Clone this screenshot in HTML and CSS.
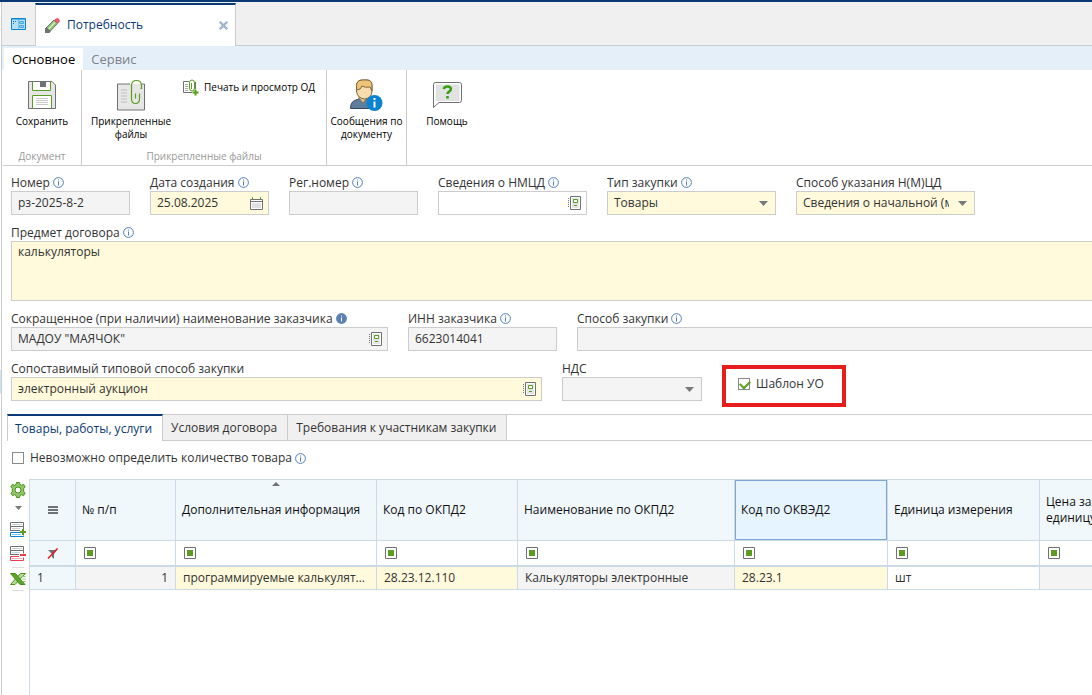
FILE: index.html
```html
<!DOCTYPE html>
<html lang="ru">
<head>
    <meta charset="UTF-8">
    <meta name="viewport" content="width=device-width, initial-scale=1.0">
    <title>Потребность</title>
    <link rel="stylesheet" href="styles.css">
</head>
<body>
    <!-- Shared icons -->
    <svg class="sprite" aria-hidden="true">
        <symbol id="icon-info" viewBox="0 0 11 11">
            <circle cx="5.5" cy="5.5" r="4.9" fill="#fff" stroke="#4f7fba" />
            <path d="M5 2.5h1v1H5zM5 4.6h1v4H5z" fill="#4f7fba" />
        </symbol>
        <symbol id="icon-info-solid" viewBox="0 0 11 11">
            <circle cx="5.5" cy="5.5" r="5.4" fill="#5b80b2" />
            <path d="M5 2.5h1v1H5zM5 4.6h1v4H5z" fill="#fff" />
        </symbol>
        <symbol id="icon-book" viewBox="0 0 13 14">
            <path d="M2.5 .5h10v13h-10z" fill="#fff" stroke="#6f7275" />
            <path d="M4 2h7v10H4z" fill="#e4e4e4" />
            <path d="M5.500 3.500h4v3h-4z" fill="#fff" stroke="#5b9e1f" />
            <path d="M6 9h3v1H6z" fill="#5b9e1f" />
            <path d="M0 2h1v1H0zM0 4h1v1H0zM0 6h1v1H0zM0 8h1v1H0zM0 10h1v1H0z" fill="#6f7275" />
        </symbol>
        <symbol id="icon-arrow" viewBox="0 0 9 5">
            <path d="M0 0h9L4.5 5z" fill="#77797c" />
        </symbol>
        <symbol id="icon-filter" viewBox="0 0 12 12">
            <path d="M.5 .5h11v11H.5z" fill="#fff" stroke="#6f7275" />
            <path d="M3 3h6v6H3z" fill="#5b9e1f" />
        </symbol>
    </svg>

    <header class="window-tabs">
        <button class="home-tab" aria-label="Рабочий стол">
            <svg width="15" height="12" viewBox="0 0 15 12">
                <path d="M.5 .5h14v11H.5z" fill="#b5e0f8" stroke="#0a84d0" />
                <path d="M1 1h13v1H1z" fill="#0a84d0" opacity=".5" />
                <path d="M2 3h1v1H2zM4 3h1v1H4zM2 5h1v1H2z" fill="#2a6a94" />
                <path d="M7 2h1v9H7z" fill="#0a84d0" opacity=".35" />
                <path d="M8.5 3.5h4v2h-4zM8.5 7.5h4v2h-4z" fill="#8dccef" stroke="#4cabdf" />
            </svg>
        </button>
        <div class="window-tab">
            <svg width="15" height="15" viewBox="0 0 15 15">
                <path d="M.5 14.500V10.500L9 2l3.500 3.500-8.500 9z" fill="#8cc56a" stroke="#6f7275" />
                <path d="M3 11.500l7-7" stroke="#d9f0cc" stroke-width="1.200" />
                <path d="M0 15v-4.500l2-1L5.500 13l-1 2z" fill="#6f7275" />
                <path d="M9.200 2L11 .5q1.500-1 3 .5t.5 3L12.800 5.800z" fill="#ef5a70" />
            </svg>
            <span>Потребность</span>
            <button aria-label="Закрыть">
                <svg width="9" height="9" viewBox="0 0 9 9">
                    <path d="M.8 .8l7.400 7.400M8.200 .8L.8 8.200" stroke="#a4b6cc" stroke-width="2.400" />
                </svg>
            </button>
        </div>
    </header>

    <main>
        <nav class="ribbon-tabs">
            <button class="active">Основное</button>
            <button>Сервис</button>
        </nav>

        <div class="ribbon">
            <section class="group group-document">
                <button class="big">
                    <svg width="28" height="28" viewBox="0 0 28 28">
                        <path d="M.5 .5h23.500l3.500 3.500v23.500H.5z" fill="#e6e6e6" stroke="#6f7275" />
                        <path d="M4.500 1v8.500h18V1" fill="#fff" stroke="#5b9e1f" />
                        <path d="M5 .5h17" stroke="#6f7275" />
                        <path d="M12 1h6v5h-6z" fill="#6f7275" />
                        <path d="M4.500 27.500v-13h19v13" fill="#fff" stroke="#5b9e1f" />
                        <path d="M8 17.500h12M8 19.500h12M8 21.500h12M8 23.500h12" stroke="#c9c9c9" />
                        <path d="M.5 27.500h27" stroke="#6f7275" />
                    </svg>
                    Сохранить
                </button>
                <h2>Документ</h2>
            </section>

            <section class="group group-files">
                <div class="actions">
                    <button class="big">
                        <svg width="28" height="31" viewBox="0 0 28 31">
                            <path d="M.5 4.500h27v26H.5z" fill="#e6e6e6" />
                            <path d="M13 4.500H.5v26h27v-26H25" fill="none" stroke="#6f7275" />
                            <path d="M4 10.500h6M4 13.500h6M4 16.500h6M4 19.500h6M4 22.500h6" stroke="#c2c2c2" />
                            <path d="M14.500 17V6q0-5 5-5t5 5v3h-1M22.500 14v5.500q0 4.500-4 4.500t-4-4.500V9M18.500 14v5" fill="none" stroke="#5b9e1f" stroke-width="1.200" />
                        </svg>
                        Прикрепленные файлы
                    </button>
                    <button class="small">
                        <svg width="17" height="17" viewBox="0 0 17 17">
                            <path d="M7 2.500H1.500v11H10" fill="none" stroke="#6f7275" />
                            <path d="M13.500 3v7" stroke="#6f7275" />
                            <path d="M3 5.500h3M3 7.500h3M3 9.500h3M3 11.500h3" stroke="#a9a9a9" />
                            <path d="M9.500 4v6M7.500 9V4q0-3 2.500-3t2.500 3v5q0 3-2.500 3T7.500 9z" fill="none" stroke="#5b9e1f" />
                            <path d="M12.500 10.500h2v2h2v2h-2v2h-2v-2h-2v-2h2z" fill="#5b9e1f" />
                        </svg>
                        Печать и просмотр ОД
                    </button>
                </div>
                <h2>Прикрепленные файлы</h2>
            </section>

            <section class="group group-messages">
                <button class="big">
                    <svg width="33" height="32" viewBox="0 0 33 32">
                        <path d="M.5 29.500q0-8 7-9l4-2h4l5 2q5 2 5 9z" fill="#5f7d9c" stroke="#33485e" />
                        <path d="M9 19l4 5 4-5v-5H9z" fill="#eac38d" stroke="#7d694b" stroke-width=".8" />
                        <path d="M6.500 7q0-6 6-6h4.500q5 0 5 6v5q0 7-7.500 8Q7 19 6.500 12z" fill="#f7dcae" stroke="#80663c" />
                        <path d="M6.500 11V7q0-6 6-6H17q5 0 5 6v5l-2-4q-5 1-8-1-1 4-5.500 4z" fill="#f0c478" stroke="#80663c" />
                        <circle cx="24.500" cy="24" r="8" fill="#0a84d0" />
                        <path d="M23.500 19h2v2h-2zM23.500 22.500h2v6h-2z" fill="#fff" />
                    </svg>
                    Сообщения по документу
                </button>
            </section>

            <section class="group group-help">
                <button class="big">
                    <svg width="29" height="26" viewBox="0 0 29 26">
                        <path d="M2.500 .5h24q2 0 2 2v16q0 2-2 2H6l-5.500 5v-23q0-2 2-2z" fill="#fff" stroke="#6f7275" />
                        <path d="M3 2.500h23.500V19H2.500z" fill="#e2e2e2" />
                        <path d="M10.800 7q.5-2.500 3.700-2.500t3.400 2.400q0 1.800-2 2.900-1.400.8-1.400 2.300" fill="none" stroke="#36a014" stroke-width="2.600" />
                        <path d="M13.200 14h2.600v2.600h-2.600z" fill="#36a014" />
                    </svg>
                    Помощь
                </button>
            </section>
        </div>

        <form class="document">
            <div class="row">
                <div class="field w-number">
                    <label for="number">Номер<svg class="info"><use href="#icon-info" /></svg></label>
                    <div class="box readonly"><input type="text" id="number" value="рз-2025-8-2" readonly></div>
                </div>
                <div class="field w-number">
                    <label for="created">Дата создания<svg class="info"><use href="#icon-info" /></svg></label>
                    <div class="box required">
                        <input type="text" id="created" value="25.08.2025">
                        <button type="button" aria-label="Календарь">
                            <svg width="13" height="13" viewBox="0 0 13 13">
                                <path d="M.5 2.500h12v10H.5z" fill="#fff" stroke="#6f7275" />
                                <path d="M1 4.500h11" stroke="#6f7275" />
                                <path d="M2 6h9v5H2z" fill="#e0e0e0" />
                                <path d="M2.500 0v2M10.500 0v2" stroke="#5b9e1f" />
                            </svg>
                        </button>
                    </div>
                </div>
                <div class="field w-reg">
                    <label for="reg">Рег.номер<svg class="info"><use href="#icon-info" /></svg></label>
                    <div class="box readonly"><input type="text" id="reg" readonly></div>
                </div>
                <div class="field w-code">
                    <label for="nmcd">Сведения о НМЦД<svg class="info"><use href="#icon-info" /></svg></label>
                    <div class="box">
                        <input type="text" id="nmcd">
                        <button type="button" aria-label="Выбрать"><svg class="book"><use href="#icon-book" /></svg></button>
                    </div>
                </div>
                <div class="field w-type">
                    <label for="type">Тип закупки<svg class="info"><use href="#icon-info" /></svg></label>
                    <div class="box required">
                        <select id="type"><option>Товары</option></select>
                        <svg class="arrow"><use href="#icon-arrow" /></svg>
                    </div>
                </div>
                <div class="field w-method">
                    <label for="method">Способ указания Н(М)ЦД</label>
                    <div class="box required">
                        <select id="method"><option>Сведения о начальной (максимальной) цене</option></select>
                        <svg class="arrow"><use href="#icon-arrow" /></svg>
                    </div>
                </div>
            </div>

            <div class="row">
                <div class="field grow">
                    <label for="subject">Предмет договора<svg class="info"><use href="#icon-info" /></svg></label>
                    <textarea id="subject">калькуляторы</textarea>
                </div>
            </div>

            <div class="row">
                <div class="field w-customer">
                    <label for="customer">Сокращенное (при наличии) наименование заказчика<svg class="info"><use href="#icon-info-solid" /></svg></label>
                    <div class="box readonly">
                        <input type="text" id="customer" value="МАДОУ &quot;МАЯЧОК&quot;" readonly>
                        <button type="button" aria-label="Выбрать"><svg class="book"><use href="#icon-book" /></svg></button>
                    </div>
                </div>
                <div class="field w-code">
                    <label for="inn">ИНН заказчика<svg class="info"><use href="#icon-info" /></svg></label>
                    <div class="box readonly"><input type="text" id="inn" value="6623014041" readonly></div>
                </div>
                <div class="field grow">
                    <label for="way">Способ закупки<svg class="info"><use href="#icon-info" /></svg></label>
                    <div class="box readonly open"><input type="text" id="way" readonly></div>
                </div>
            </div>

            <div class="row">
                <div class="field w-typical">
                    <label for="typical">Сопоставимый типовой способ закупки</label>
                    <div class="box required">
                        <input type="text" id="typical" value="электронный аукцион">
                        <button type="button" aria-label="Выбрать"><svg class="book"><use href="#icon-book" /></svg></button>
                    </div>
                </div>
                <div class="field w-vat">
                    <label for="vat">НДС</label>
                    <div class="box readonly">
                        <select id="vat"><option></option></select>
                        <svg class="arrow"><use href="#icon-arrow" /></svg>
                    </div>
                </div>
                <label class="check highlight"><input type="checkbox" checked>Шаблон УО</label>
            </div>
        </form>

        <div class="detail">
            <nav class="detail-tabs">
                <button class="active">Товары, работы, услуги</button>
                <button>Условия договора</button>
                <button>Требования к участникам закупки</button>
            </nav>

            <label class="check unknown-count"><input type="checkbox">Невозможно определить количество товара<svg class="info"><use href="#icon-info" /></svg></label>

            <div class="grid">
                <div class="grid-tools">
                    <button aria-label="Настройки">
                        <svg width="16" height="16" viewBox="0 0 16 16">
                            <path d="M6.500 .5h3l.5 2 1.500.8 2-1 1.700 2.600L13.700 6.500v3l1.500 1.600-1.700 2.600-2-1-1.500.8-.5 2h-3l-.5-2-1.500-.8-2 1L.8 11.100l1.500-1.600v-3L.8 4.900l1.700-2.600 2 1L6 2.500z" fill="#8fc56b" stroke="#4c9117" />
                            <circle cx="8" cy="8" r="3" fill="#fff" stroke="#4c9117" />
                        </svg>
                    </button>
                    <button class="more" aria-label="Меню настроек">
                        <svg width="7" height="4" viewBox="0 0 9 5"><use href="#icon-arrow" /></svg>
                    </button>
                    <button aria-label="Добавить строку">
                        <svg width="16" height="16" viewBox="0 0 16 16">
                            <path d="M.5 .5h13v4H.5zM.5 8.500v-4h13v3" fill="#fff" stroke="#6f7275" />
                            <path d="M0 8.500h10" stroke="#6f7275" />
                            <path d="M2 2.500h10M2 6.500h8" stroke="#cfcfcf" />
                            <path d="M10 10.500H.5v4h13v-1" fill="#fff" stroke="#0a84d0" />
                            <path d="M2 12.500h9" stroke="#8cc9ee" />
                            <path d="M12 7h2v2h2v2h-2v2h-2v-2h-2V9h2z" fill="#5b9e1f" />
                        </svg>
                    </button>
                    <button aria-label="Удалить строку">
                        <svg width="16" height="16" viewBox="0 0 16 16">
                            <path d="M.5 .5h13v4H.5zM.5 8.500v-4h13v3" fill="#fff" stroke="#6f7275" />
                            <path d="M0 8.500h9" stroke="#6f7275" />
                            <path d="M2 2.500h10M2 6.500h8" stroke="#cfcfcf" />
                            <path d="M9 10.500H.5v4h13v-3" fill="#fff" stroke="#ec3a4e" />
                            <path d="M2 12.500h10" stroke="#f7a9b1" />
                            <path d="M10 8h6v2h-6z" fill="#ec3a4e" />
                        </svg>
                    </button>
                    <hr>
                    <button aria-label="Выгрузить в Excel">
                        <svg width="16" height="12" viewBox="0 0 16 12">
                            <path d="M10.500 .5h5L5 11.500H.5z" fill="#b4dc9a" stroke="#4c9117" />
                            <path d="M.5 .5h5l9.500 11h-5z" fill="#5ba529" stroke="#4c9117" />
                            <path d="M11.500 3.500h4M12.500 6h3M12.500 8.500h3" stroke="#8fc56b" />
                        </svg>
                    </button>
                    <hr>
                </div>

                <div class="grid-body">
                    <table>
                        <colgroup>
                            <col class="c-menu"><col class="c-num"><col class="c-extra"><col class="c-okpd"><col class="c-name"><col class="c-okved"><col class="c-unit"><col class="c-price">
                        </colgroup>
                        <thead>
                            <tr class="heads">
                                <th class="center">
                                    <svg width="10" height="8" viewBox="0 0 10 8"><path d="M0 0h10v2H0zM0 3h10v2H0zM0 6h10v2H0z" fill="#6f7275" /></svg>
                                </th>
                                <th>№ п/п</th>
                                <th class="sorted">Дополнительная информация</th>
                                <th>Код по ОКПД2</th>
                                <th>Наименование по ОКПД2</th>
                                <th class="selected">Код по ОКВЭД2</th>
                                <th>Единица измерения</th>
                                <th>Цена за<br>единицу</th>
                            </tr>
                            <tr class="filters">
                                <td class="side center">
                                    <svg width="12" height="11" viewBox="0 0 12 11">
                                        <path d="M1 2h9L7 6v5L5 9V6z" fill="#6f7275" />
                                        <path d="M1 10.500L10.500 .5" stroke="#e51c23" stroke-width="1.500" />
                                    </svg>
                                </td>
                                <td><svg class="filter"><use href="#icon-filter" /></svg></td>
                                <td><svg class="filter"><use href="#icon-filter" /></svg></td>
                                <td><svg class="filter"><use href="#icon-filter" /></svg></td>
                                <td><svg class="filter"><use href="#icon-filter" /></svg></td>
                                <td><svg class="filter"><use href="#icon-filter" /></svg></td>
                                <td><svg class="filter"><use href="#icon-filter" /></svg></td>
                                <td><svg class="filter"><use href="#icon-filter" /></svg></td>
                            </tr>
                        </thead>
                        <tbody>
                            <tr>
                                <td class="side">1</td>
                                <td class="readonly num">1</td>
                                <td class="required">программируемые калькуляторы</td>
                                <td class="required">28.23.12.110</td>
                                <td class="readonly">Калькуляторы электронные</td>
                                <td class="required">28.23.1</td>
                                <td>шт</td>
                                <td class="readonly"></td>
                            </tr>
                        </tbody>
                    </table>
                </div>
            </div>
        </div>
    </main>
</body>
</html>
```
FILE: styles.css
```css
* {
    box-sizing: border-box;
}
body {
    margin: 0;
    min-height: 100vh;
    display: flex;
    flex-direction: column;
    overflow: hidden;
    border-top: 2px solid #0a3a73;
    background: #fff;
    color: #333;
    font: 12px/16px "Open Sans", "Noto Sans", sans-serif;
}
button, input, select, textarea {
    margin: 0;
    padding: 0;
    border: 0;
    border-radius: 0;
    background: none;
    color: inherit;
    font: inherit;
}
button {
    cursor: pointer;
}
svg {
    display: block;
    flex: none;
}
.sprite {
    position: absolute;
    width: 0;
    height: 0;
}

/* Window tabs */
.window-tabs {
    display: flex;
    height: 44px;
    margin-left: 1px;
    border-left: 1px solid #ccc;
    border-bottom: 1px solid #ccc;
    background: #f0f0f0;
}
.home-tab {
    width: 33px;
    display: flex;
    align-items: center;
    justify-content: center;
}
.window-tab {
    width: 201px;
    height: 44px;
    display: flex;
    align-items: center;
    gap: 7px;
    padding: 0 7px 2px 9px;
    margin-top: 1px;
    border: 1px solid #ccc;
    border-top: 2px solid #0a3a73;
    border-bottom: 0;
    background: #fff;
    color: #0a3a73;
}
.window-tab span {
    flex: 1;
}

main {
    flex: 1;
    display: flex;
    flex-direction: column;
    margin-left: 1px;
    border-left: 1px solid #ccc;
}
/* handle of the collapsed side panel */
main::before {
    content: "";
    position: absolute;
    top: 370px;
    left: 0;
    width: 1px;
    height: 24px;
    background: #cce6f8;
}

/* Ribbon */
.ribbon-tabs {
    display: flex;
    height: 24px;
    padding: 2px 0 0 2px;
    background: #e5effa;
}
.ribbon-tabs button {
    padding: 0 8px;
    color: #7d8288;
    font-size: 13px;
}
.ribbon-tabs .active {
    background: #fff;
    color: #000;
}
.ribbon {
    display: flex;
    height: 96px;
    margin-left: 1px;
    border-bottom: 1px solid #ccc;
    color: #000;
    font-size: 10px;
    line-height: 13px;
}
.group {
    display: flex;
    flex-direction: column;
    justify-content: space-between;
    padding: 9px 0 2px;
    border-right: 1px solid #ccc;
}
.group h2 {
    margin: 0;
    color: #999;
    font-size: 10px;
    font-weight: normal;
    line-height: 14px;
    text-align: center;
}
.group-document {
    width: 79px;
}
.group-files {
    width: 245px;
}
.group-messages {
    width: 80px;
}
.group-help {
    width: 80px;
    border-right: 0;
}
.actions {
    display: flex;
    align-items: flex-start;
    gap: 8px;
    padding-left: 6px;
}
.big {
    display: flex;
    flex-direction: column;
    align-items: center;
    gap: 4px;
}
.big svg {
    height: 32px;
}
.actions .big {
    width: 86px;
}
.small {
    display: flex;
    align-items: center;
    gap: 5px;
    white-space: nowrap;
}

/* Document form */
.document {
    display: flex;
    flex-direction: column;
    gap: 10px;
    padding: 9px 0 0 9px;
}
.row {
    display: flex;
    gap: 20px;
}
.field {
    flex: none;
}
.field label {
    display: flex;
    height: 16px;
    gap: 3px;
    white-space: nowrap;
}
.row .grow {
    flex: 1;
}
.w-number { width: 119px; }
.w-reg { width: 129px; }
.w-code { width: 149px; }
.w-type { width: 169px; }
.w-method { width: 179px; }
.w-customer { width: 377px; }
.w-typical { width: 531px; }
.w-vat { width: 140px; }
.info {
    width: 11px;
    height: 11px;
    margin-top: 2px;
}
.box {
    position: relative;
    display: flex;
    height: 24px;
    border: 1px solid #ccc;
    background: #fff;
}
.box.open {
    border-right: 0;
}
.required, .box.required {
    background: #fffadb;
}
.readonly, .box.readonly {
    background: #f4f4f4;
}
.box input, .box select {
    flex: 1;
    min-width: 0;
    padding: 0 6px;
    outline: 0;
}
.box select {
    appearance: none;
    padding-right: 25px;
}
.box button {
    display: flex;
    align-items: center;
    padding: 0 5px;
}
.book {
    width: 13px;
    height: 14px;
}
.arrow {
    position: absolute;
    top: 9px;
    right: 7px;
    width: 9px;
    height: 5px;
    pointer-events: none;
}
textarea {
    display: block;
    width: 100%;
    height: 60px;
    padding: 2px 6px;
    border: 1px solid #ccc;
    border-right: 0;
    background: #fffadb;
    resize: none;
    outline: 0;
}
.check {
    display: flex;
    align-items: center;
    gap: 6px;
}
.check input {
    appearance: none;
    width: 12px;
    height: 12px;
    border: 1px solid #8a8a8a;
    background: #fff;
}
.check input:checked::before {
    content: "";
    display: block;
    width: 8px;
    height: 5px;
    margin: 1px;
    border: solid #5b9e1f;
    border-width: 0 0 2px 2px;
    transform: rotate(-45deg);
}
.highlight {
    width: 124px;
    height: 42px;
    margin: 4px 0 -6px;
    padding: 0 0 4px 12px;
    border: 4px solid #e81e1e;
}

/* Detail tabs */
.detail {
    flex: 1;
    display: flex;
    flex-direction: column;
    padding: 13px 0 0 5px;
}
.detail-tabs {
    display: flex;
    height: 27px;
    border: solid #ccc;
    border-width: 1px 0;
}
.detail-tabs button {
    padding: 0 10px 0 8px;
    border-right: 1px solid #ccc;
    background: #f0f0f0;
}
.detail-tabs .active {
    margin: -1px 0;
    padding-left: 7px;
    border-top: 2px solid #0a3a73;
    border-left: 1px solid #ccc;
    background: #fff;
    color: #0a3a73;
}
.unknown-count {
    padding: 9px 0 13px 5px;
}
.unknown-count .info {
    margin: 0 0 0 -3px;
}

/* Grid */
.grid {
    flex: 1;
    display: flex;
}
.grid-tools {
    width: 22px;
    display: flex;
    flex-direction: column;
    align-items: center;
    gap: 8px;
    padding-top: 3px;
}
.grid-tools .more {
    padding-bottom: 4px;
}
.grid-tools hr {
    width: 12px;
    margin: -3px 0;
    border: 0;
    border-top: 1px solid #ddd;
}
.grid-body {
    flex: 1;
    min-width: 0;
    overflow: hidden;
    border: solid #ccdae6;
    border-width: 1px 0 0 1px;
}
table {
    width: 1162px;
    table-layout: fixed;
    border-collapse: separate;
    border-spacing: 0;
}
.c-menu { width: 46px; }
.c-num { width: 100px; }
.c-extra { width: 201px; }
.c-okpd { width: 141px; }
.c-name { width: 217px; }
.c-okved { width: 153px; }
.c-unit, .c-price { width: 152px; }
th, td {
    padding: 0 7px;
    border: solid #ccdae6;
    border-width: 0 1px 1px 0;
    overflow: hidden;
    text-align: left;
    text-overflow: ellipsis;
    white-space: nowrap;
}
th {
    height: 61px;
    padding: 0 6px;
    background: #f0f8fc;
    color: #111;
    font-weight: normal;
}
th.selected {
    background: #e5f4ff;
    box-shadow: inset 0 0 0 1px #7fa6d3;
}
th.sorted {
    position: relative;
}
th.sorted::before {
    content: "";
    position: absolute;
    top: 2px;
    left: 96px;
    border: 4px solid transparent;
    border-top: 0;
    border-bottom-color: #6f7275;
}
.filters td {
    height: 26px;
    border-bottom-width: 2px;
}
.filter {
    width: 12px;
    height: 12px;
    margin-left: 1px;
}
tbody td {
    height: 23px;
}
.side {
    background: #f0f8fc;
}
.center svg {
    margin: 0 auto;
}
.num {
    text-align: right;
}
```
